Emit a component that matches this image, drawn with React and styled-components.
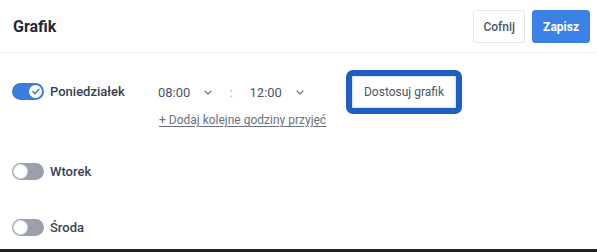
import React, { useState } from "react";
import styled, { createGlobalStyle } from "styled-components";

const GlobalStyle = createGlobalStyle`
  html, body {
    margin: 0;
    padding: 0;
    background: #ffffff;
  }
  body {
    font-family: Roboto, "Liberation Sans", Arial, sans-serif;
  }
`;

const Page = styled.div`
  width: 597px;
  height: 252px;
  display: flex;
  flex-direction: column;
  background: #ffffff;
  overflow: hidden;
`;

const Content = styled.div`
  flex: 1;
  overflow: hidden;
`;

const BottomBar = styled.div`
  height: 3px;
  background: #232323;
`;

const Header = styled.div`
  height: 52px;
  display: flex;
  align-items: center;
  justify-content: space-between;
  padding: 0 7px 0 13px;
  border-bottom: 1px solid #f1f2f4;
`;

const Title = styled.h1`
  margin: 0;
  font-size: 16px;
  font-weight: 700;
  color: #1f2937;
`;

const Actions = styled.div`
  display: flex;
  gap: 7px;
  margin-top: 1px;
`;

const HeaderButton = styled.button`
  height: 33px;
  padding: 0 ${(p) => (p.$primary ? "10px" : "9px")};
  border-radius: 3px;
  font-family: inherit;
  font-size: 12px;
  font-weight: ${(p) => (p.$primary ? 700 : 500)};
  color: ${(p) => (p.$primary ? "#ffffff" : "#4b5563")};
  background: ${(p) => (p.$primary ? "#3b82e4" : "#ffffff")};
  border: 1px solid ${(p) => (p.$primary ? "#3b82e4" : "#e6e8eb")};
  cursor: pointer;
`;

const Body = styled.div`
  padding-left: 12px;
`;

const DayRow = styled.div`
  display: flex;
  align-items: ${(p) => (p.$active ? "flex-start" : "center")};
  height: ${(p) => (p.$active ? "auto" : "56px")};
  padding: ${(p) => (p.$active ? "17px 0 16px" : "0")};
`;

const DayCol = styled.div`
  width: 146px;
  height: ${(p) => (p.$active ? "43px" : "auto")};
  display: flex;
  align-items: center;
  gap: 6px;
`;

const Track = styled.button`
  width: 32px;
  height: 17px;
  border-radius: 9px;
  border: 0;
  padding: 2px;
  display: flex;
  align-items: center;
  justify-content: ${(p) => (p.$on ? "flex-end" : "flex-start")};
  background: ${(p) => (p.$on ? "#3a7ddf" : "#9aa1ad")};
  cursor: pointer;
`;

const Knob = styled.span`
  width: 13px;
  height: 13px;
  border-radius: 50%;
  background: #ffffff;
  box-shadow: ${(p) => (p.$on ? "none" : "0 0 0 1px #d7dae0")};
  display: flex;
  align-items: center;
  justify-content: center;
`;

const DayLabel = styled.span`
  font-size: 13px;
  font-weight: 500;
  color: #374151;
`;

const TimesCol = styled.div`
  width: 187px;
  display: flex;
  flex-direction: column;
`;

const TimeLine = styled.div`
  height: 43px;
  display: flex;
  align-items: center;
  padding-top: 1px;
  box-sizing: border-box;
`;

const TimeSelect = styled.div`
  display: flex;
  align-items: center;
  gap: 14px;
  font-size: 13px;
  color: #4b5563;
`;

const Separator = styled.span`
  margin: 0 17px 0 17px;
  font-size: 13px;
  color: #9ca3af;
`;

const AddLink = styled.a`
  font-size: 12px;
  line-height: 14px;
  color: #6b7280;
  text-decoration: underline;
  text-underline-offset: 2px;
  margin-left: 1px;
  cursor: pointer;
`;

const CustomButton = styled.button`
  margin: 6px 0 0 7px;
  height: 32px;
  width: 104px;
  padding: 0;
  background: #ffffff;
  border: 1px solid #e3e5e8;
  box-shadow: inset 0 0 3px rgba(0, 0, 0, 0.12);
  font-family: inherit;
  font-size: 12px;
  color: #4b5563;
  outline: 6px solid #1d5ec2;
  border-radius: 1px;
  cursor: pointer;
`;

const Chevron = () => (
  <svg width="8" height="5" viewBox="0 0 8 5" fill="none">
    <path d="M1 1l3 3 3-3" stroke="#6b7280" strokeWidth="1.1" strokeLinecap="round" strokeLinejoin="round" />
  </svg>
);

const Toggle = ({ on, onClick }) => (
  <Track $on={on} onClick={onClick}>
    <Knob $on={on}>
      {on && (
        <svg width="8" height="7" viewBox="0 0 8 7" fill="none">
          <path d="M1 3.6l2 2 4-4.4" stroke="#3a7ddf" strokeWidth="1.5" strokeLinecap="round" strokeLinejoin="round" />
        </svg>
      )}
    </Knob>
  </Track>
);

export default function App() {
    const [days, setDays] = useState([
        { name: "Poniedziałek", on: true },
        { name: "Wtorek", on: false },
        { name: "Środa", on: false },
    ]);

    const flip = (i) => {
        setDays(days.map((d, j) => (j === i ? { ...d, on: !d.on } : d)));
    };

    return (
        <Page>
            <GlobalStyle />
            <Content>
                <Header>
                    <Title>Grafik</Title>
                    <Actions>
                        <HeaderButton>Cofnij</HeaderButton>
                        <HeaderButton $primary>Zapisz</HeaderButton>
                    </Actions>
                </Header>
                <Body>
                    {days.map((d, i) => (
                        <DayRow key={d.name} $active={d.on}>
                            <DayCol $active={d.on}>
                                <Toggle on={d.on} onClick={() => flip(i)} />
                                <DayLabel>{d.name}</DayLabel>
                            </DayCol>
                            {d.on && (
                                <>
                                    <TimesCol>
                                        <TimeLine>
                                            <TimeSelect>08:00 <Chevron /></TimeSelect>
                                            <Separator>:</Separator>
                                            <TimeSelect>12:00 <Chevron /></TimeSelect>
                                        </TimeLine>
                                        <AddLink>+ Dodaj kolejne godziny przyjęć</AddLink>
                                    </TimesCol>
                                    <CustomButton>Dostosuj grafik</CustomButton>
                                </>
                            )}
                        </DayRow>
                    ))}
                </Body>
            </Content>
            <BottomBar />
        </Page>
    );
}
